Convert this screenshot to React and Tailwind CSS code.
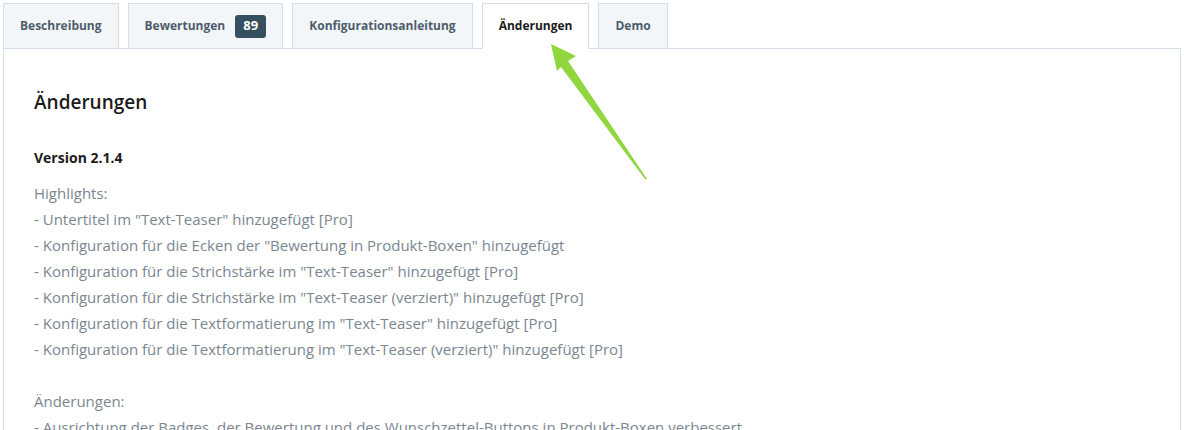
import React from "react";

const TABS = [
    { label: "Beschreibung" },
    { label: "Bewertungen", badge: "89" },
    { label: "Konfigurationsanleitung" },
    { label: "Änderungen", active: true },
    { label: "Demo" },
];

const HIGHLIGHTS = [
    '- Untertitel im "Text-Teaser" hinzugefügt [Pro]',
    '- Konfiguration für die Ecken der "Bewertung in Produkt-Boxen" hinzugefügt',
    '- Konfiguration für die Strichstärke im "Text-Teaser" hinzugefügt [Pro]',
    '- Konfiguration für die Strichstärke im "Text-Teaser (verziert)" hinzugefügt [Pro]',
    '- Konfiguration für die Textformatierung im "Text-Teaser" hinzugefügt [Pro]',
    '- Konfiguration für die Textformatierung im "Text-Teaser (verziert)" hinzugefügt [Pro]',
];

const CHANGES = [
    "- Ausrichtung der Badges, der Bewertung und des Wunschzettel-Buttons in Produkt-Boxen verbessert",
];

export default function App() {
    return (
        <div className="relative h-[430px] overflow-hidden bg-white px-[3px] pt-[3px] font-['Open_Sans','Noto_Sans',sans-serif]">
            {/* Tabs */}
            <div className="relative z-10 flex gap-[9px]">
                {TABS.map((t) => (
                    <div
                        key={t.label}
                        className={`-mb-px flex h-[46px] items-center gap-[10px] border border-[#d3dee8] px-4 text-[12px] font-bold ${
                            t.active ? "border-b-white bg-white text-[#1c1c1c]" : "bg-[#f3f6f9] text-[#4e5d6c]"
                        }`}
                    >
                        <span>{t.label}</span>
                        {t.badge && (
                            <span className="flex h-[23px] w-[31px] items-center justify-center rounded-[3px] bg-[#37505f] text-[13px] font-bold text-white">
                                {t.badge}
                            </span>
                        )}
                    </div>
                ))}
            </div>

            {/* Panel */}
            <div className="h-[400px] border border-[#d3dee8] px-[30px] pt-[38px]">
                <h2 className="text-[19px] font-semibold leading-[30px] text-[#1c1c1c]">Änderungen</h2>
                <div className="mt-[31px] text-[14px] font-bold leading-[20px] text-[#1c1c1c]">Version 2.1.4</div>
                <div className="mt-[12px] text-[15px] leading-[26px] text-[#7b8691]">
                    <div>Highlights:</div>
                    {HIGHLIGHTS.map((l) => (
                        <div key={l}>{l}</div>
                    ))}
                    <div className="h-[26px]" />
                    <div>Änderungen:</div>
                    {CHANGES.map((l) => (
                        <div key={l}>{l}</div>
                    ))}
                </div>
            </div>

            {/* Arrow pointing at the active tab */}
            <svg className="pointer-events-none absolute left-0 top-0 z-20" width="1184" height="430">
                <polygon
                    points="551,44 576,56 568,61 647,179 645,179 561,67 557,71"
                    fill="#8fd63f"
                />
            </svg>
        </div>
    );
}
